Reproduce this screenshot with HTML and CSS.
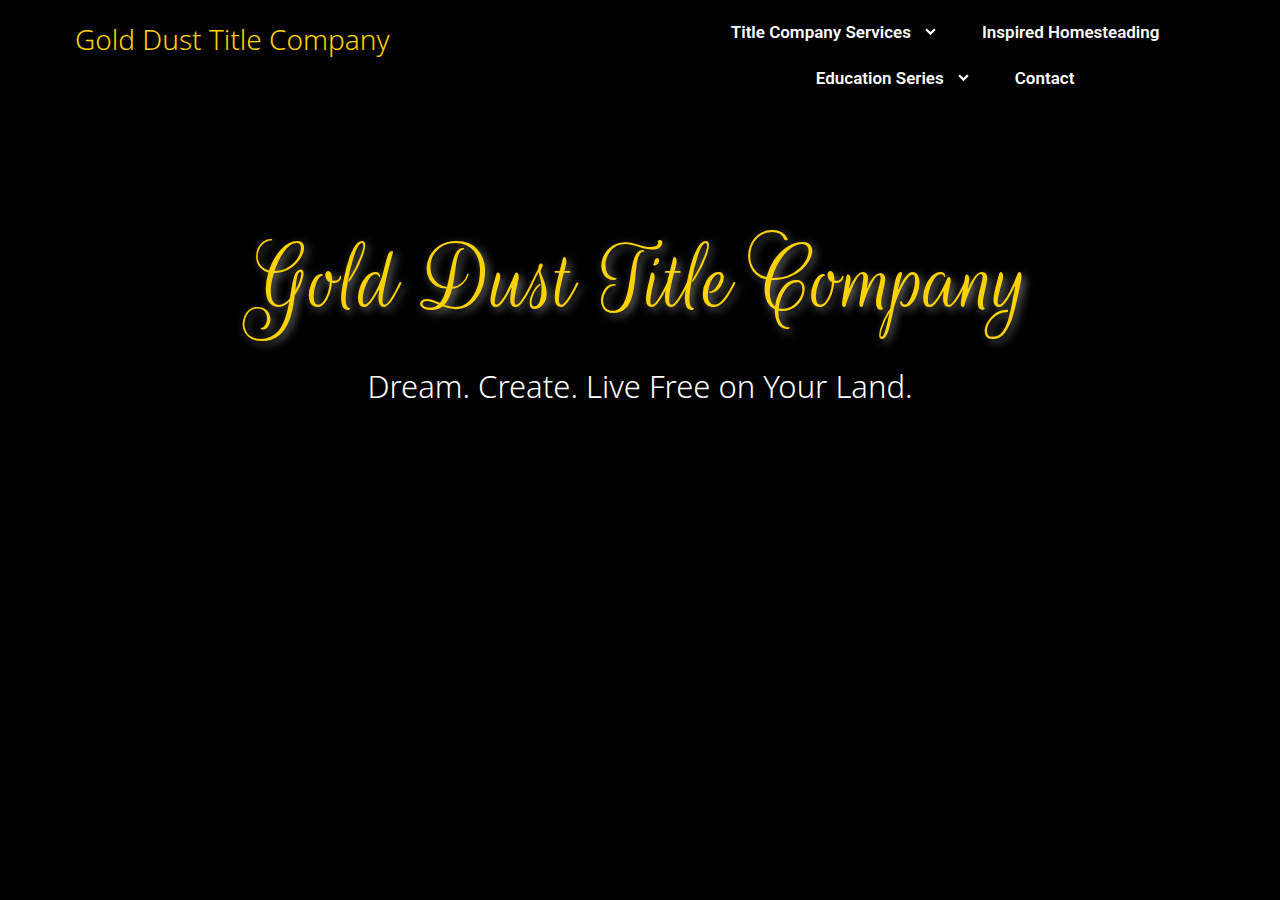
FILE: index.html
```html
<!DOCTYPE html>
<html lang="en">
<head>
  <meta charset="UTF-8">
  <meta name="viewport" content="width=device-width, initial-scale=1.0">
  <title>Gold Dust Title Company</title>
  <link rel="stylesheet" href="styles.css">
</head>
<body>
  <header class="site-header">
    <a class="site-title" href="#">Gold Dust Title Company</a>
    <nav class="main-nav" aria-label="Main">
      <a class="nav-link" href="#services">Title Company Services
        <svg class="chevron" viewBox="0 0 10 7" aria-hidden="true"><path d="M1 1l4 4 4-4"/></svg>
      </a>
      <a class="nav-link" href="#homesteading">Inspired Homesteading</a>
      <a class="nav-link" href="#education">Education Series
        <svg class="chevron" viewBox="0 0 10 7" aria-hidden="true"><path d="M1 1l4 4 4-4"/></svg>
      </a>
      <a class="nav-link" href="#contact">Contact</a>
    </nav>
  </header>

  <main class="hero">
    <h1 class="hero-title">Gold Dust Title Company</h1>
    <p class="hero-tagline">Dream. Create. Live Free on Your Land.</p>
  </main>
</body>
</html>
```
FILE: styles.css
```css
* {
  box-sizing: border-box;
}

body {
  margin: 0;
  min-height: 100vh;
  background: #000;
  color: #fff;
  font-family: "Noto Sans", sans-serif;
}

.site-header {
  display: flex;
  justify-content: space-between;
  align-items: flex-start;
  max-width: 1140px;
  margin: 0 auto;
  padding: 9px 5px;
}

.site-title {
  color: #ffd200;
  font-size: 28px;
  font-weight: 300;
  line-height: 60px;
  text-decoration: none;
}

.main-nav {
  display: flex;
  flex-wrap: wrap;
  justify-content: center;
  column-gap: 46px;
  width: 46%;
}

.nav-link {
  display: flex;
  align-items: center;
  gap: 14px;
  color: #fff;
  font-family: Roboto, sans-serif;
  font-size: 17px;
  font-weight: 600;
  line-height: 46px;
  text-decoration: none;
}

.nav-link:hover {
  color: #ffd200;
}

.chevron {
  width: 11px;
  height: 8px;
  fill: none;
  stroke: currentColor;
  stroke-width: 2;
}

.hero {
  padding: 122px 20px;
  text-align: center;
}

.hero-title {
  margin: 0;
  color: #ffd200;
  font-family: "Rouge Script", "Liberation Serif", cursive;
  font-size: 100px;
  font-weight: 600;
  line-height: 100px;
  text-shadow: 3px 3px 8px rgba(255, 255, 255, 0.5);
}

.hero-tagline {
  margin: 34px 0 0;
  font-size: 31px;
  font-weight: 300;
  line-height: 40px;
}
```
